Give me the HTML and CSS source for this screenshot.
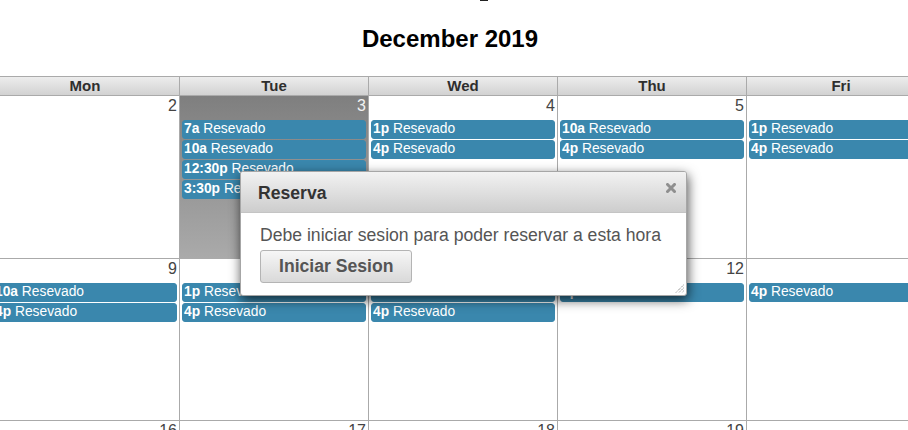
FILE: index.html
```html
<!DOCTYPE html>
<html lang="es">
<head>
<meta charset="utf-8">
<title>Reservas</title>
<link rel="stylesheet" href="styles.css">
</head>
<body>
<div class="page">
  <div class="topmark"><span></span></div>
  <h2 class="title">December 2019</h2>
  <div class="cal">
    <div class="head">
      <div class="hcell">Sun</div>
      <div class="hcell">Mon</div>
      <div class="hcell">Tue</div>
      <div class="hcell">Wed</div>
      <div class="hcell">Thu</div>
      <div class="hcell">Fri</div>
      <div class="hcell">Sat</div>
    </div>
    <div class="week w1">
      <div class="day"><div class="num">1</div></div>
      <div class="day"><div class="num">2</div></div>
      <div class="day today"><div class="num">3</div>
        <div class="ev"><b>7a</b> Resevado</div>
        <div class="ev"><b>10a</b> Resevado</div>
        <div class="ev"><b>12:30p</b> Resevado</div>
        <div class="ev"><b>3:30p</b> Resevado</div>
      </div>
      <div class="day"><div class="num">4</div>
        <div class="ev"><b>1p</b> Resevado</div>
        <div class="ev"><b>4p</b> Resevado</div>
      </div>
      <div class="day"><div class="num">5</div>
        <div class="ev"><b>10a</b> Resevado</div>
        <div class="ev"><b>4p</b> Resevado</div>
      </div>
      <div class="day"><div class="num">6</div>
        <div class="ev"><b>1p</b> Resevado</div>
        <div class="ev"><b>4p</b> Resevado</div>
      </div>
      <div class="day"><div class="num">7</div></div>
    </div>
    <div class="week w2">
      <div class="day"><div class="num">8</div></div>
      <div class="day"><div class="num">9</div>
        <div class="ev"><b>10a</b> Resevado</div>
        <div class="ev"><b>4p</b> Resevado</div>
      </div>
      <div class="day"><div class="num">10</div>
        <div class="ev"><b>1p</b> Resevado</div>
        <div class="ev"><b>4p</b> Resevado</div>
      </div>
      <div class="day"><div class="num">11</div>
        <div class="ev"><b>10a</b> Resevado</div>
        <div class="ev"><b>4p</b> Resevado</div>
      </div>
      <div class="day"><div class="num">12</div>
        <div class="ev"><b>1p</b> Resevado</div>
      </div>
      <div class="day"><div class="num">13</div>
        <div class="ev"><b>4p</b> Resevado</div>
      </div>
      <div class="day"><div class="num">14</div></div>
    </div>
    <div class="week w3">
      <div class="day"><div class="num">15</div></div>
      <div class="day"><div class="num">16</div></div>
      <div class="day"><div class="num">17</div></div>
      <div class="day"><div class="num">18</div></div>
      <div class="day"><div class="num">19</div></div>
      <div class="day"><div class="num">20</div></div>
      <div class="day"><div class="num">21</div></div>
    </div>
  </div>

  <div class="dialog">
    <div class="dtitlebar">
      <span class="dtitle">Reserva</span>
      <svg class="dclose" width="10" height="10" viewBox="0 0 10 10" aria-hidden="true">
        <path d="M1.5 1.5 L8.5 8.5 M8.5 1.5 L1.5 8.5" stroke="#8f8f8f" stroke-width="3" stroke-linecap="square"/>
      </svg>
    </div>
    <div class="dbody">
      <p class="dtext">Debe iniciar sesion para poder reservar a esta hora</p>
      <button class="dbtn" type="button">Iniciar Sesion</button>
    </div>
    <svg class="dresize" width="9" height="9" viewBox="0 0 9 9" aria-hidden="true">
      <path d="M8.5 1 L1 8.5 M8.5 4 L4 8.5 M8.5 7 L7 8.5" stroke="#666" stroke-width="1" stroke-dasharray="1 1"/>
    </svg>
  </div>
</div>
</body>
</html>
```

FILE: styles.css
```css
html, body {
  margin: 0;
  padding: 0;
  background: #fff;
  overflow: hidden;
}
body {
  font-family: "Liberation Sans", Arial, sans-serif;
  color: #333;
  width: 908px;
  height: 430px;
}
.page {
  position: relative;
  width: 908px;
  height: 430px;
  overflow: hidden;
}
.topmark {
  height: 2px;
}
.topmark span {
  display: block;
  margin-left: 480px;
  width: 8px;
  height: 1px;
  background: #222;
}
.title {
  margin: 23px 0 23px 0;
  width: 900px;
  height: 28px;
  line-height: 28px;
  font-size: 24px;
  font-weight: bold;
  text-align: center;
  color: #000;
}
.cal {
  margin-left: -199px;
  width: 1324px;
}
.head {
  display: grid;
  grid-template-columns: repeat(7, 189px);
  border-top: 1px solid #aaa;
  border-bottom: 1px solid #aaa;
  border-right: 1px solid #aaa;
  background: linear-gradient(#ededed, #d2d2d2);
}
.hcell {
  border-left: 1px solid #aaa;
  height: 18px;
  line-height: 18px;
  font-size: 15px;
  font-weight: bold;
  text-align: center;
  color: #2e2e2e;
}
.week {
  display: grid;
  grid-template-columns: repeat(7, 189px);
  border-bottom: 1px solid #aaa;
  border-right: 1px solid #aaa;
}
.w1 { height: 162px; }
.w2 { height: 161px; }
.w3 { height: 60px; }
.day {
  border-left: 1px solid #aaa;
  display: flex;
  flex-direction: column;
}
.today {
  background: linear-gradient(#7f7f7f, #aaaaaa);
}
.num {
  height: 24px;
  padding-right: 2px;
  text-align: right;
  font-size: 16px;
  line-height: 20px;
  color: #444;
}
.today .num {
  color: #f2f2f2;
}
.ev {
  margin: 0 2px 1px 2px;
  border: 1px solid #3a87ad;
  border-radius: 3px;
  background: #3a87ad;
  color: #fff;
  font-size: 13.8px;
  line-height: 16px;
  padding: 0 1px 1px 1px;
  white-space: nowrap;
  overflow: hidden;
}
.ev b {
  font-weight: bold;
}

/* dialog overlay */
.dialog {
  position: absolute;
  left: 240px;
  top: 171px;
  width: 447px;
  box-sizing: border-box;
  border: 1px solid #a6a6a6;
  border-radius: 3px;
  background: #fff;
  box-shadow: 1px 4px 12px rgba(0, 0, 0, 0.7);
}
.dtitlebar {
  display: flex;
  justify-content: space-between;
  align-items: flex-start;
  height: 29px;
  padding: 11px 10px 0 17px;
  border-bottom: 1px solid #c4c4c4;
  background: linear-gradient(#f2f2f2, #cdcdcd);
  border-radius: 2px 2px 0 0;
}
.dtitle {
  font-size: 17.6px;
  font-weight: bold;
  line-height: 20px;
  color: #333;
}
.dclose {
  display: block;
}
.dbody {
  padding: 12px 20px 12px 19px;
}
.dtext {
  margin: 0 0 5px 0;
  font-size: 17.6px;
  line-height: 20px;
  color: #555;
}
.dbtn {
  display: block;
  margin: 0;
  padding: 6px 18px;
  border: 1px solid #b4b4b4;
  border-radius: 3px;
  background: linear-gradient(#f6f6f6, #d9d9d9);
  font-family: "Liberation Sans", Arial, sans-serif;
  font-size: 17.6px;
  font-weight: bold;
  line-height: 19px;
  color: #555;
}
.dresize {
  position: absolute;
  right: 2px;
  bottom: 2px;
}
```
